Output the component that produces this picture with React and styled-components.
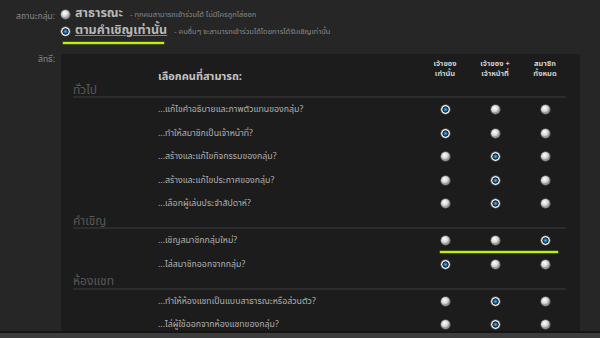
import React from "react";
import styled, { createGlobalStyle, css } from "styled-components";

const GlobalStyle = createGlobalStyle`
  html, body { margin: 0; padding: 0; background: #262626; }
  body { font-family: Tahoma, "Noto Sans Thai", "Noto Sans", "DejaVu Sans", sans-serif; overflow: hidden; }
`;

const Page = styled.div`
  width: 600px;
  height: 338px;
  position: relative;
  overflow: hidden;
  padding-top: 7px;
  box-sizing: border-box;
`;

const FormRow = styled.div`
  display: flex;
  align-items: flex-start;
  gap: 6px;
  margin-bottom: ${(p) => p.$mb || 0}px;
`;

const Label = styled.div`
  width: 55px;
  text-align: right;
  font-size: 8.5px;
  line-height: 12px;
  color: #8a8a8a;
  padding-top: ${(p) => p.$pt || 0}px;
  flex: none;
`;

const Options = styled.div`
  display: flex;
  flex-direction: column;
  gap: 3px;
`;

const Option = styled.div`
  display: flex;
  align-items: center;
  gap: 5px;
  height: 14px;
`;

const OptionTitle = styled.span`
  font-size: 12.5px;
  line-height: 14px;
  font-weight: bold;
  color: #b8b8b8;
  ${(p) => p.$underline && css`text-decoration: underline; text-decoration-color: #888;`}
`;

const OptionDesc = styled.span`
  font-size: 7.5px;
  color: #8a8a8a;
  margin-left: 2px;
`;

const Radio = styled.span`
  display: inline-block;
  width: 9px;
  height: 9px;
  border-radius: 50%;
  flex: none;
  box-shadow: 0 0 0 0.5px #777;
  background: ${(p) =>
    p.$on
      ? "radial-gradient(circle at 50% 50%, #4fb2ee 0, #1869a8 1.6px, #10304a 2.4px, #3a3a3a 2.9px, #e8e8e8 3.4px, #ffffff 3.9px, #b8b8b8 4.5px)"
      : "radial-gradient(circle at 40% 35%, #ffffff 0, #e6e6e6 2px, #c4c4c4 4px, #9a9a9a 4.5px)"};
`;

const Highlight = styled.div`
  position: absolute;
  height: 2px;
  background: #c2ee0a;
  box-shadow: 0 0 0 0.5px #5d7a00;
  left: ${(p) => p.$left}px;
  top: ${(p) => p.$top}px;
  width: ${(p) => p.$width}px;
`;

const Panel = styled.div`
  width: 519px;
  height: 277px;
  background: #1c1c1c;
  box-sizing: border-box;
  padding: 5px 10px 0 12px;
  overflow: hidden;
  border-radius: 2px 2px 0 0;
`;

const Grid = styled.div`
  display: grid;
  grid-template-columns: 1fr 50px 50px 50px;
  align-items: center;
`;

const Header = styled(Grid)`
  height: 25.5px;
  align-items: end;
`;

const Title = styled.div`
  font-size: 11px;
  font-weight: bold;
  color: #c4c4c4;
  padding-left: 85px;
  line-height: 13px;
  margin-bottom: 2px;
`;

const ColHead = styled.div`
  align-self: start;
  display: flex;
  flex-direction: column;
  align-items: center;
`;

const ColLine = styled.span`
  font-size: 7.5px;
  font-weight: bold;
  color: #cfcfcf;
  line-height: 10px;
  height: 10px;
  white-space: nowrap;
`;

const SectionHeading = styled.div`
  font-size: 12px;
  line-height: 11.5px;
  height: 11.5px;
  color: #585858;
  border-bottom: 2px solid #2c2c2c;
  margin-right: 4px;
`;

const Row = styled(Grid)`
  height: 23.5px;
`;

const RowLabel = styled.div`
  padding-left: 85px;
  font-size: 8.8px;
  color: #b0b0b0;
  white-space: nowrap;
`;

const Cell = styled.div`
  display: flex;
  justify-content: center;
`;

const Footer = styled.div`
  position: absolute;
  left: 0;
  right: 0;
  bottom: 0;
  height: 5px;
  background: #3c3c3c;
  border-top: 2px solid #151515;
`;

const sections = [
  {
    name: "ทั่วไป",
    rows: [
      ["...แก้ไขคำอธิบายและภาพตัวแทนของกลุ่ม?", 0],
      ["...ทำให้สมาชิกเป็นเจ้าหน้าที่?", 0],
      ["...สร้างและแก้ไขกิจกรรมของกลุ่ม?", 1],
      ["...สร้างและแก้ไขประกาศของกลุ่ม?", 1],
      ["...เลือกผู้เล่นประจำสัปดาห์?", 1],
    ],
  },
  {
    name: "คำเชิญ",
    rows: [
      ["...เชิญสมาชิกกลุ่มใหม่?", 2],
      ["...ไล่สมาชิกออกจากกลุ่ม?", 0],
    ],
  },
  {
    name: "ห้องแชท",
    rows: [
      ["...ทำให้ห้องแชทเป็นแบบสาธารณะหรือส่วนตัว?", 1],
      ["...ไล่ผู้ใช้ออกจากห้องแชทของกลุ่ม?", 1],
    ],
  },
];

const cols = [
  ["เจ้าของ", "เท่านั้น"],
  ["เจ้าของ +", "เจ้าหน้าที่"],
  ["สมาชิก", "ทั้งหมด"],
];

export default function App() {
  return (
    <Page>
      <GlobalStyle />
      <FormRow $mb={16}>
        <Label $pt={4}>สถานะกลุ่ม:</Label>
        <Options>
          <Option>
            <Radio />
            <OptionTitle>สาธารณะ</OptionTitle>
            <OptionDesc>- ทุกคนสามารถเข้าร่วมได้ ไม่มีใครถูกไล่ออก</OptionDesc>
          </Option>
          <Option>
            <Radio $on />
            <OptionTitle $underline>ตามคำเชิญเท่านั้น</OptionTitle>
            <OptionDesc>- คนอื่นๆ จะสามารถเข้าร่วมได้โดยการได้รับเชิญเท่านั้น</OptionDesc>
          </Option>
        </Options>
      </FormRow>
      <FormRow>
        <Label $pt={0}>สิทธิ์:</Label>
        <Panel>
          <Header>
            <Title>เลือกคนที่สามารถ:</Title>
            {cols.map((c) => (
              <ColHead key={c[0]}>
                <ColLine>{c[0]}</ColLine>
                <ColLine>{c[1]}</ColLine>
              </ColHead>
            ))}
          </Header>
          {sections.map((s) => (
            <React.Fragment key={s.name}>
              <SectionHeading>{s.name}</SectionHeading>
              {s.rows.map(([label, sel]) => (
                <Row key={label}>
                  <RowLabel>{label}</RowLabel>
                  {[0, 1, 2].map((i) => (
                    <Cell key={i}>
                      <Radio $on={i === sel} />
                    </Cell>
                  ))}
                </Row>
              ))}
            </React.Fragment>
          ))}
        </Panel>
      </FormRow>
      <Highlight $left={63} $top={42} $width={101} />
      <Highlight $left={440} $top={251} $width={118} />
      <Footer />
    </Page>
  );
}
